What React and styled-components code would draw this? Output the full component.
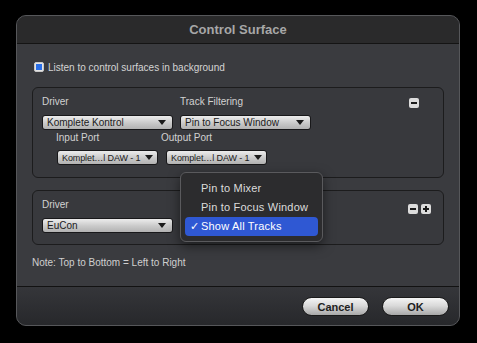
import styled, { createGlobalStyle } from 'styled-components';

const GlobalStyle = createGlobalStyle`
  html, body {
    margin: 0;
    padding: 0;
    background: #000;
  }
  body {
    font-family: "Liberation Sans", Arial, sans-serif;
  }
`;

const Page = styled.div`
  width: 477px;
  height: 343px;
  box-sizing: border-box;
  padding: 15px 0 0 16px;
  background: #000;
`;

const Window = styled.div`
  position: relative;
  width: 444px;
  height: 311px;
  box-sizing: border-box;
  border: 1px solid #56575a;
  border-radius: 10px;
  overflow: hidden;
  display: flex;
  flex-direction: column;
  background: #3a3b3f;
`;

const TitleBar = styled.div`
  height: 27px;
  flex: none;
  background: #2a2a2b;
  border-bottom: 1px solid #141414;
  display: flex;
  align-items: center;
  justify-content: center;
  color: #a7a7a7;
  font-size: 13px;
  font-weight: bold;
`;

const Body = styled.div`
  flex: 1;
  padding: 17px 15px 0 15px;
  display: flex;
  flex-direction: column;
  color: #d4d4d4;
`;

const CheckRow = styled.label`
  display: flex;
  align-items: center;
  gap: 4px;
  font-size: 10px;
  height: 12px;
  margin-left: 2px;
`;

const CheckBox = styled.span`
  width: 8px;
  height: 8px;
  border: 1px solid #c8c8c8;
  border-radius: 2px;
  background: #e4e4e4;
  display: flex;
  align-items: center;
  justify-content: center;

  &::after {
    content: '';
    width: 6px;
    height: 6px;
    background: #2a6fe8;
  }
`;

const Panel = styled.div`
  margin-top: ${({ $top }) => $top}px;
  height: ${({ $height }) => $height}px;
  box-sizing: border-box;
  border: 1px solid #1c1c1d;
  border-radius: 6px;
  background: #38393d;
  padding: 7px 8px 0 9px;
  display: flex;
  flex-direction: column;
  gap: 1px;
`;

const PanelRow = styled.div`
  display: flex;
  align-items: flex-start;
  padding-left: ${({ $indent }) => $indent || 0}px;
`;

const Field = styled.div`
  display: flex;
  flex-direction: column;
  width: ${({ $width }) => $width}px;
  margin-right: ${({ $gap }) => $gap || 0}px;
`;

const Label = styled.div`
  font-size: 10px;
  line-height: 14px;
  height: 14px;
  color: #d2d2d2;
  margin-left: ${({ $pull }) => $pull || 0}px;
  margin-bottom: ${({ $gap }) => $gap}px;
  white-space: nowrap;
`;

const Select = styled.div`
  width: ${({ $width }) => $width}px;
  height: 15px;
  box-sizing: border-box;
  border: 1px solid #18181a;
  border-radius: 3px;
  background: linear-gradient(#ececec, #c9c9c9 55%, #b2b2b2);
  color: #1b1b1b;
  font-size: ${({ $small }) => ($small ? '9px' : '10px')};
  letter-spacing: ${({ $small }) => ($small ? '-0.1px' : '0')};
  display: flex;
  align-items: center;
  padding: 0 ${({ $small }) => ($small ? 4 : 6)}px 0 4px;
  white-space: nowrap;

  &::after {
    content: '';
    flex: none;
    border-left: 4px solid transparent;
    border-right: 4px solid transparent;
    border-top: 5px solid #1b1b1b;
    margin-left: 3px;
  }
`;

const SelectText = styled.span`
  flex: 1;
  overflow: hidden;
`;

const Spacer = styled.div`
  flex: 1;
`;

const Tools = styled.div`
  display: flex;
  gap: 3px;
  margin-top: ${({ $top }) => $top}px;
  margin-right: ${({ $right }) => $right}px;
`;

const ToolButton = styled.div`
  width: 10px;
  height: 10px;
  border-radius: 2px;
  background: #dcdcdc;
  position: relative;

  &::before {
    content: '';
    position: absolute;
    left: 2px;
    top: 4px;
    width: 6px;
    height: 2px;
    background: #1a1a1a;
  }

  &::after {
    content: '';
    position: absolute;
    left: 4px;
    top: 2px;
    width: 2px;
    height: 6px;
    background: ${({ $plus }) => ($plus ? '#1a1a1a' : 'transparent')};
  }
`;

const Note = styled.div`
  margin-top: 12px;
  font-size: 10px;
  color: #cfcfcf;
`;

const Footer = styled.div`
  height: 37px;
  flex: none;
  border-top: 1px solid #121212;
  background: linear-gradient(#35363a, #27282b);
  display: flex;
  align-items: center;
  justify-content: flex-end;
  gap: 13px;
  padding: 1px 10px 0 0;
`;

const Button = styled.div`
  width: 67px;
  height: 19px;
  box-sizing: border-box;
  border: 1px solid #1a1a1a;
  border-radius: 10px;
  background: linear-gradient(#f4f4f4, #dadada 45%, #a8a8a8);
  color: #1e1e1e;
  font-size: 11px;
  font-weight: bold;
  display: flex;
  align-items: center;
  justify-content: center;
`;

const Menu = styled.div`
  position: absolute;
  left: 163px;
  top: 156px;
  width: 143px;
  height: 70px;
  box-sizing: border-box;
  padding: 5px 4px;
  border: 1px solid #5a5a5d;
  border-radius: 6px;
  background: #2c2c2e;
  box-shadow: 0 4px 12px rgba(0, 0, 0, 0.5);
  display: flex;
  flex-direction: column;
`;

const MenuItem = styled.div`
  height: 20px;
  display: flex;
  align-items: center;
  padding-left: 16px;
  border-radius: 4px;
  position: relative;
  font-size: 11px;
  letter-spacing: 0.2px;
  color: ${({ $active }) => ($active ? '#ffffff' : '#dcdcdc')};
  background: ${({ $active }) => ($active ? '#2f58d3' : 'transparent')};
`;

const Check = styled.span`
  position: absolute;
  left: 5px;
  font-size: 11px;
`;

export default function App() {
  return (
    <>
      <GlobalStyle />
      <Page>
        <Window>
          <TitleBar>Control Surface</TitleBar>
          <Body>
            <CheckRow>
              <CheckBox />
              Listen to control surfaces in background
            </CheckRow>

            <Panel $top={14} $height={91}>
              <PanelRow>
                <Field $width={131} $gap={7}>
                  <Label $gap={6}>Driver</Label>
                  <Select $width={131}><SelectText>Komplete Kontrol</SelectText></Select>
                </Field>
                <Field $width={131}>
                  <Label $gap={6}>Track Filtering</Label>
                  <Select $width={131}><SelectText>Pin to Focus Window</SelectText></Select>
                </Field>
                <Spacer />
                <Tools $top={3} $right={16}>
                  <ToolButton />
                </Tools>
              </PanelRow>
              <PanelRow $indent={15}>
                <Field $width={101} $gap={8}>
                  <Label $gap={5} $pull={-1}>Input Port</Label>
                  <Select $width={101} $small><SelectText>Komplet…l DAW - 1</SelectText></Select>
                </Field>
                <Field $width={101}>
                  <Label $gap={5} $pull={-5}>Output Port</Label>
                  <Select $width={101} $small><SelectText>Komplet…l DAW - 1</SelectText></Select>
                </Field>
              </PanelRow>
            </Panel>

            <Panel $top={12} $height={55}>
              <PanelRow>
                <Field $width={131}>
                  <Label $gap={6}>Driver</Label>
                  <Select $width={131}><SelectText>EuCon</SelectText></Select>
                </Field>
                <Spacer />
                <Tools $top={6} $right={4}>
                  <ToolButton />
                  <ToolButton $plus />
                </Tools>
              </PanelRow>
            </Panel>

            <Note>Note: Top to Bottom = Left to Right</Note>
          </Body>
          <Footer>
            <Button>Cancel</Button>
            <Button>OK</Button>
          </Footer>

          <Menu>
            <MenuItem>Pin to Mixer</MenuItem>
            <MenuItem>Pin to Focus Window</MenuItem>
            <MenuItem $active>
              <Check>✓</Check>
              Show All Tracks
            </MenuItem>
          </Menu>
        </Window>
      </Page>
    </>
  );
}
